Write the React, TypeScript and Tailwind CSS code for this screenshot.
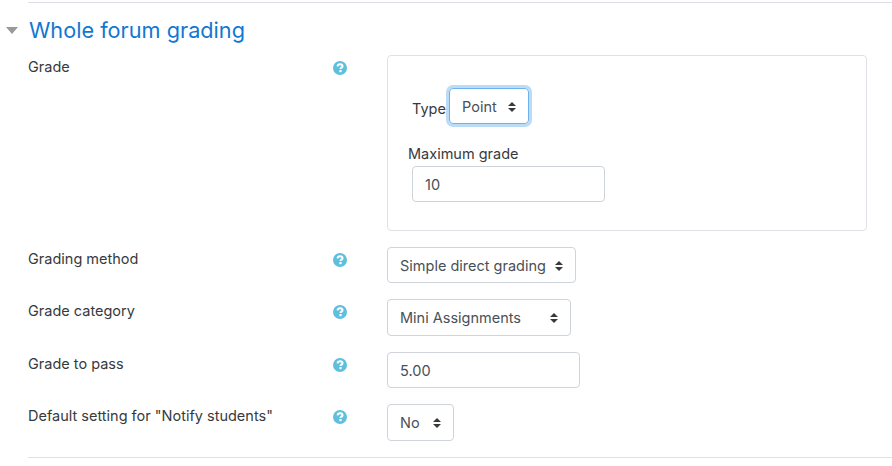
import type { ReactNode } from "react"

const font = "font-['Inter','Liberation_Sans',sans-serif]"

function HelpIcon() {
  return (
    <svg width="14" height="14" viewBox="0 0 14 14" className="block">
      <circle cx="7" cy="7" r="7" fill="#5fc0de" />
      <path
        d="M4.6 5.4C4.7 4 5.7 3.2 7.1 3.2C8.5 3.2 9.5 4.1 9.5 5.2C9.5 6.6 7.5 6.6 7.5 8"
        fill="none"
        stroke="#fff"
        strokeWidth="2"
      />
      <rect x="6.4" y="9" width="2.2" height="2.2" fill="#fff" />
    </svg>
  )
}

function Arrows() {
  return (
    <svg width="8" height="10" viewBox="0 0 8 10" className="block shrink-0">
      <path d="M4 0L8 4H0Z M4 10L0 6H8Z" fill="#373a3c" />
    </svg>
  )
}

function Select({ label, className }: { label: string; className: string }) {
  return (
    <div
      className={`flex items-center justify-between rounded border bg-white pl-3 pr-[12px] pt-px text-[14.5px] text-[#495057] ${className}`}
    >
      <span>{label}</span>
      <Arrows />
    </div>
  )
}

function Input({ value, className }: { value: string; className: string }) {
  return (
    <div
      className={`flex items-center rounded border border-[#ced4da] bg-white px-3 pt-px text-[14.5px] text-[#495057] ${className}`}
    >
      {value}
    </div>
  )
}

function Row({
  label,
  className,
  children,
}: {
  label: string
  className?: string
  children: ReactNode
}) {
  return (
    <div className={`flex items-start ${className ?? ""}`}>
      <div className="w-[305px] shrink-0 pt-px text-[14.5px] leading-[22px] text-[#373a3c]">{label}</div>
      <div className="flex w-[54px] shrink-0 pt-[6px]">
        <HelpIcon />
      </div>
      <div>{children}</div>
    </div>
  )
}

export default function App() {
  return (
    <div className={`h-[466px] w-[892px] overflow-hidden bg-white pl-[28px] pt-[2px] ${font}`}>
      <div className="h-px bg-[#dfdfe8]" />
      <div className="-ml-[28px] flex h-[52px] items-center pt-[3px]">
        <svg width="12" height="7" viewBox="0 0 12 7" className="ml-[6px] mr-[11px] block">
          <path d="M0 0H12L6 7Z" fill="#999" />
        </svg>
        <h2 className="text-[21.7px] leading-none text-[#1177d1]">Whole forum grading</h2>
      </div>

      <Row label="Grade">
        <div className="h-[176px] w-[480px] rounded border border-[#dee2e6] pl-[20px] pt-[32px]">
          <div className="flex items-center text-[14.5px] text-[#373a3c]">
            <span className="w-[41px] pl-[4px] pt-[6px]">Type</span>
            <div className="rounded shadow-[0_0_0_3px_#bbdcf7]">
              <Select label="Point" className="h-[36px] w-[80px] border-[#6fb1ea]" />
            </div>
          </div>
          <div className="mt-[18px] pt-px text-[14.5px] leading-[22px] text-[#373a3c]">Maximum grade</div>
          <Input value="10" className="ml-[4px] mt-px h-[36px] w-[193px]" />
        </div>
      </Row>

      <Row label="Grading method" className="mt-[16px]">
        <Select label="Simple direct grading" className="h-[36px] w-[189px] border-[#ced4da]" />
      </Row>
      <Row label="Grade category" className="mt-[16px]">
        <Select label="Mini Assignments" className="h-[37px] w-[184px] border-[#ced4da]" />
      </Row>
      <Row label="Grade to pass" className="mt-[16px]">
        <Input value="5.00" className="h-[36px] w-[193px]" />
      </Row>
      <Row label={'Default setting for "Notify students"'} className="mt-[16px]">
        <Select label="No" className="h-[37px] w-[67px] border-[#ced4da]" />
      </Row>

      <div className="mt-[16px] h-px bg-[#dee2e6]" />
    </div>
  )
}
